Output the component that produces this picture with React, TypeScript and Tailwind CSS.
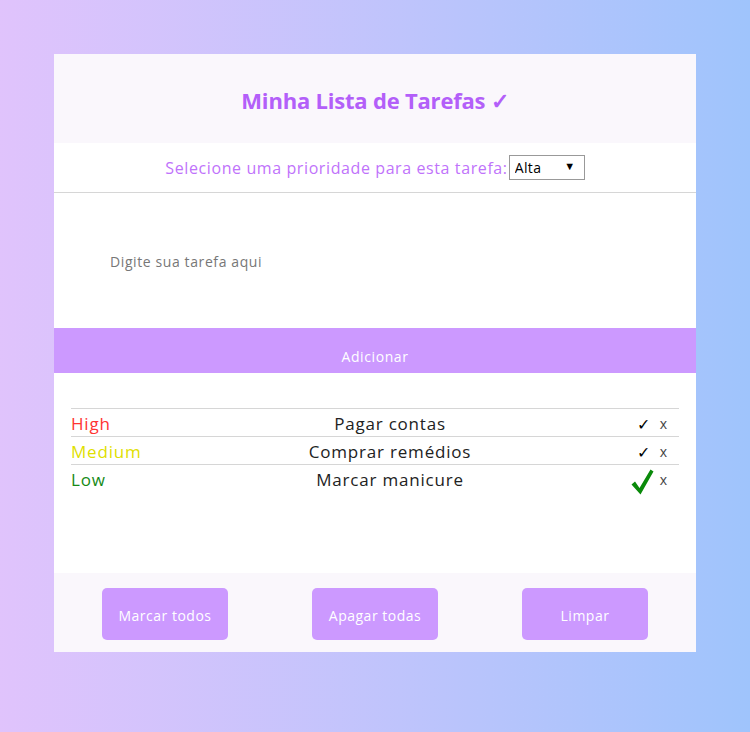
import { useState } from "react"

type Task = {
  id: number
  priority: "High" | "Medium" | "Low"
  text: string
  done: boolean
}

const PRIORITY_COLOR: Record<Task["priority"], string> = {
  High: "text-[#ff3333]",
  Medium: "text-[#e0e000]",
  Low: "text-[#168a16]",
}

const INITIAL: Task[] = [
  { id: 1, priority: "High", text: "Pagar contas", done: false },
  { id: 2, priority: "Medium", text: "Comprar remédios", done: false },
  { id: 3, priority: "Low", text: "Marcar manicure", done: true },
]

function BigCheck() {
  return (
    <svg
      width="23"
      height="26"
      viewBox="0 0 23 26"
      className="relative left-[3px] top-[2px] -my-[6px] block"
      aria-hidden="true"
    >
      <path d="M0.5 15.5 L4 12.5 L8.5 19 L19.5 0.5 L22.5 2.5 L9.5 25.5 Z" fill="#0a8a0a" />
    </svg>
  )
}

export default function App() {
  const [tasks, setTasks] = useState<Task[]>(INITIAL)
  const [text, setText] = useState("")
  const [priority, setPriority] = useState("Alta")

  const toggle = (id: number) =>
    setTasks((ts) => ts.map((t) => (t.id === id ? { ...t, done: !t.done } : t)))

  return (
    <div className="flex min-h-screen items-start justify-center bg-gradient-to-r from-[#e0c3fc] to-[#9fc4fc] pt-[54px] font-['Open_Sans',sans-serif]">
      <div className="flex w-[642px] flex-col bg-white">
        <header className="flex h-[89px] items-center justify-center bg-[#faf7fc] pt-1">
          <h1 className="text-[22px] font-bold tracking-[-0.2px] text-[#b35ff9]">
            Minha Lista de Tarefas ✓
          </h1>
        </header>

        <div className="flex h-[50px] items-center justify-center border-b border-[#d6d6d6] text-[16px] tracking-[0.6px] text-[#bf73fb]">
          <label htmlFor="prio">Selecione uma prioridade para esta tarefa:</label>
          <div className="relative ml-[1px]">
            <select
              id="prio"
              value={priority}
              onChange={(e) => setPriority(e.target.value)}
              className="h-[25px] w-[76px] appearance-none border border-[#999] bg-white pl-[5px] text-[14px] tracking-[0.4px] text-black outline-none"
            >
              <option>Alta</option>
              <option>Média</option>
              <option>Baixa</option>
            </select>
            <span className="pointer-events-none absolute right-[9px] top-[3px] text-[11px] text-black">▼</span>
          </div>
        </div>

        <input
          value={text}
          onChange={(e) => setText(e.target.value)}
          placeholder="Digite sua tarefa aqui"
          className="h-[135px] w-full bg-white pl-[56px] pt-[2px] text-[14px] tracking-[0.6px] text-black outline-none placeholder:text-[#777]"
        />

        <button className="flex h-[45px] items-center justify-center bg-[#cc99ff] pt-[11px] text-[14px] tracking-[0.6px] text-white">
          Adicionar
        </button>

        <ul className="flex h-[200px] flex-col px-[17px] pt-[35px]">
          {tasks.map((t) => (
            <li
              key={t.id}
              className="flex h-[28px] items-center border-t border-[#d6d6d6] pt-[3px] text-[17px] tracking-[0.8px]"
            >
              <span className={`w-[170px] ${PRIORITY_COLOR[t.priority]}`}>{t.priority}</span>
              <span className="flex-1 text-center text-[#222]">{t.text}</span>
              <div className="flex w-[140px] items-center justify-end pr-[12px]">
                <button onClick={() => toggle(t.id)} className="flex h-[16px] items-center">
                  {t.done ? (
                    <BigCheck />
                  ) : (
                    <span className="text-[16px] leading-none text-black">✓</span>
                  )}
                </button>
                <button
                  onClick={() => setTasks((ts) => ts.filter((x) => x.id !== t.id))}
                  className="ml-[9px] text-[14px] leading-none tracking-normal text-[#444]"
                >
                  x
                </button>
              </div>
            </li>
          ))}
        </ul>

        <footer className="flex h-[79px] items-center justify-between bg-[#faf7fc] px-[48px] pt-[2px]">
          {["Marcar todos", "Apagar todas", "Limpar"].map((label) => (
            <button
              key={label}
              onClick={() => {
                if (label === "Marcar todos") setTasks((ts) => ts.map((t) => ({ ...t, done: true })))
                if (label === "Apagar todas") setTasks([])
                if (label === "Limpar") setText("")
              }}
              className="h-[52px] w-[126px] rounded-[5px] bg-[#cc99ff] pt-1 text-[14px] tracking-[0.5px] text-white"
            >
              {label}
            </button>
          ))}
        </footer>
      </div>
    </div>
  )
}
